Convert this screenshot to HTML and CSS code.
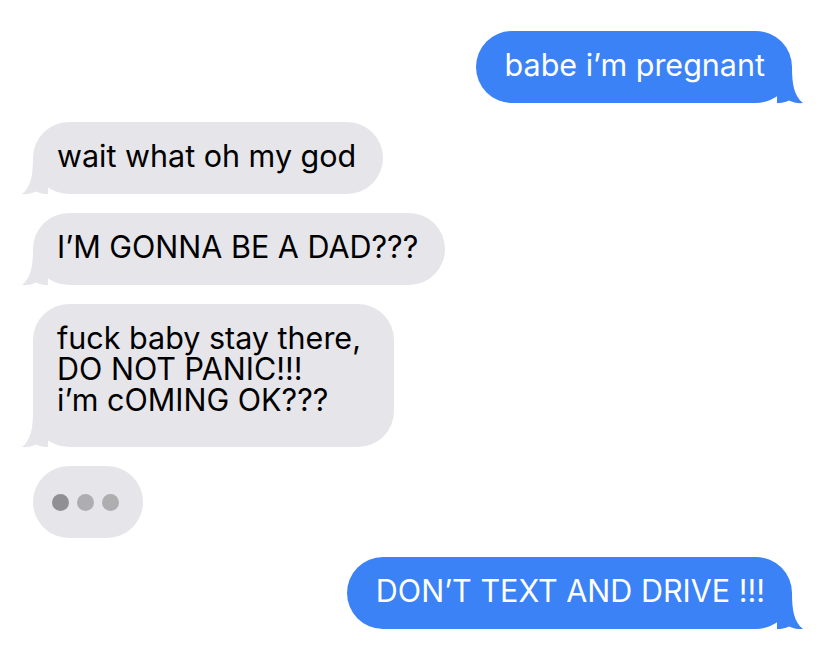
FILE: index.html
```html
<!DOCTYPE html>
<html>

<head>
    <title>Messages</title>
    <meta charset="UTF-8">
    <meta name="viewport" content="width=device-width, initial-scale=1.0">
    <link rel="stylesheet" href="styles.css">
</head>

<body>
    <div class="chat">
        <div class="row sent">
            <div class="bubble">babe i’m pregnant
                <svg class="tail" viewBox="0 0 26 37" width="26" height="37"><path d="M0,0 H15 C15,17 17,29 26,36 C21,36.6 16,35.2 12,33.4 C8,35.5 4,36 0,36 Z" /></svg>
            </div>
        </div>
        <div class="row received">
            <div class="bubble">wait what oh my god
                <svg class="tail" viewBox="0 0 26 37" width="26" height="37"><path d="M0,0 H15 C15,17 17,29 26,36 C21,36.6 16,35.2 12,33.4 C8,35.5 4,36 0,36 Z" /></svg>
            </div>
        </div>
        <div class="row received">
            <div class="bubble">I’M GONNA BE A DAD???
                <svg class="tail" viewBox="0 0 26 37" width="26" height="37"><path d="M0,0 H15 C15,17 17,29 26,36 C21,36.6 16,35.2 12,33.4 C8,35.5 4,36 0,36 Z" /></svg>
            </div>
        </div>
        <div class="row received">
            <div class="bubble multi">
                <div class="line">fuck baby stay there,</div>
                <div class="line">DO NOT PANIC!!!</div>
                <div class="line">i’m cOMING OK???</div>
                <svg class="tail" viewBox="0 0 26 37" width="26" height="37"><path d="M0,0 H15 C15,17 17,29 26,36 C21,36.6 16,35.2 12,33.4 C8,35.5 4,36 0,36 Z" /></svg>
            </div>
        </div>
        <div class="row received">
            <div class="typing">
                <span class="dot dark"></span>
                <span class="dot"></span>
                <span class="dot"></span>
            </div>
        </div>
        <div class="row sent">
            <div class="bubble">DON’T TEXT AND DRIVE !!!
                <svg class="tail" viewBox="0 0 26 37" width="26" height="37"><path d="M0,0 H15 C15,17 17,29 26,36 C21,36.6 16,35.2 12,33.4 C8,35.5 4,36 0,36 Z" /></svg>
            </div>
        </div>
    </div>
</body>

</html>
```

FILE: styles.css
```css
* {
    margin: 0;
    padding: 0;
    box-sizing: border-box;
}

body {
    font-family: Inter, "Noto Sans", sans-serif;
    background-color: #fff;
}

.chat {
    display: flex;
    flex-direction: column;
    gap: 19px;
    padding: 31px 36px 0 33px;
}

.row {
    display: flex;
}

.sent {
    justify-content: flex-end;
}

.received {
    justify-content: flex-start;
}

.bubble {
    position: relative;
    font-size: 30.5px;
    line-height: 31px;
    padding: 18px 27px 23px 24px;
    border-radius: 36px;
    white-space: nowrap;
}

.bubble.multi {
    padding-right: 33px;
    padding-bottom: 32px;
}

.line {
    height: 31px;
}

.sent .bubble {
    background-color: #3b82f6;
    color: #fff;
    padding-left: 29px;
}

.received .bubble {
    background-color: #e5e5ea;
    color: #000;
}

.tail {
    position: absolute;
    bottom: -1px;
    display: block;
}

.sent .tail {
    right: -11px;
    fill: #3b82f6;
}

.received .tail {
    left: -11px;
    fill: #e5e5ea;
    transform: scaleX(-1);
}

.typing {
    display: flex;
    align-items: center;
    gap: 8px;
    height: 72px;
    padding: 0 24px 0 19px;
    border-radius: 36px;
    background-color: #e5e5ea;
}

.dot {
    width: 17px;
    height: 17px;
    border-radius: 50%;
    background-color: #aeaeb1;
}

.dot.dark {
    background-color: #909094;
}
```
